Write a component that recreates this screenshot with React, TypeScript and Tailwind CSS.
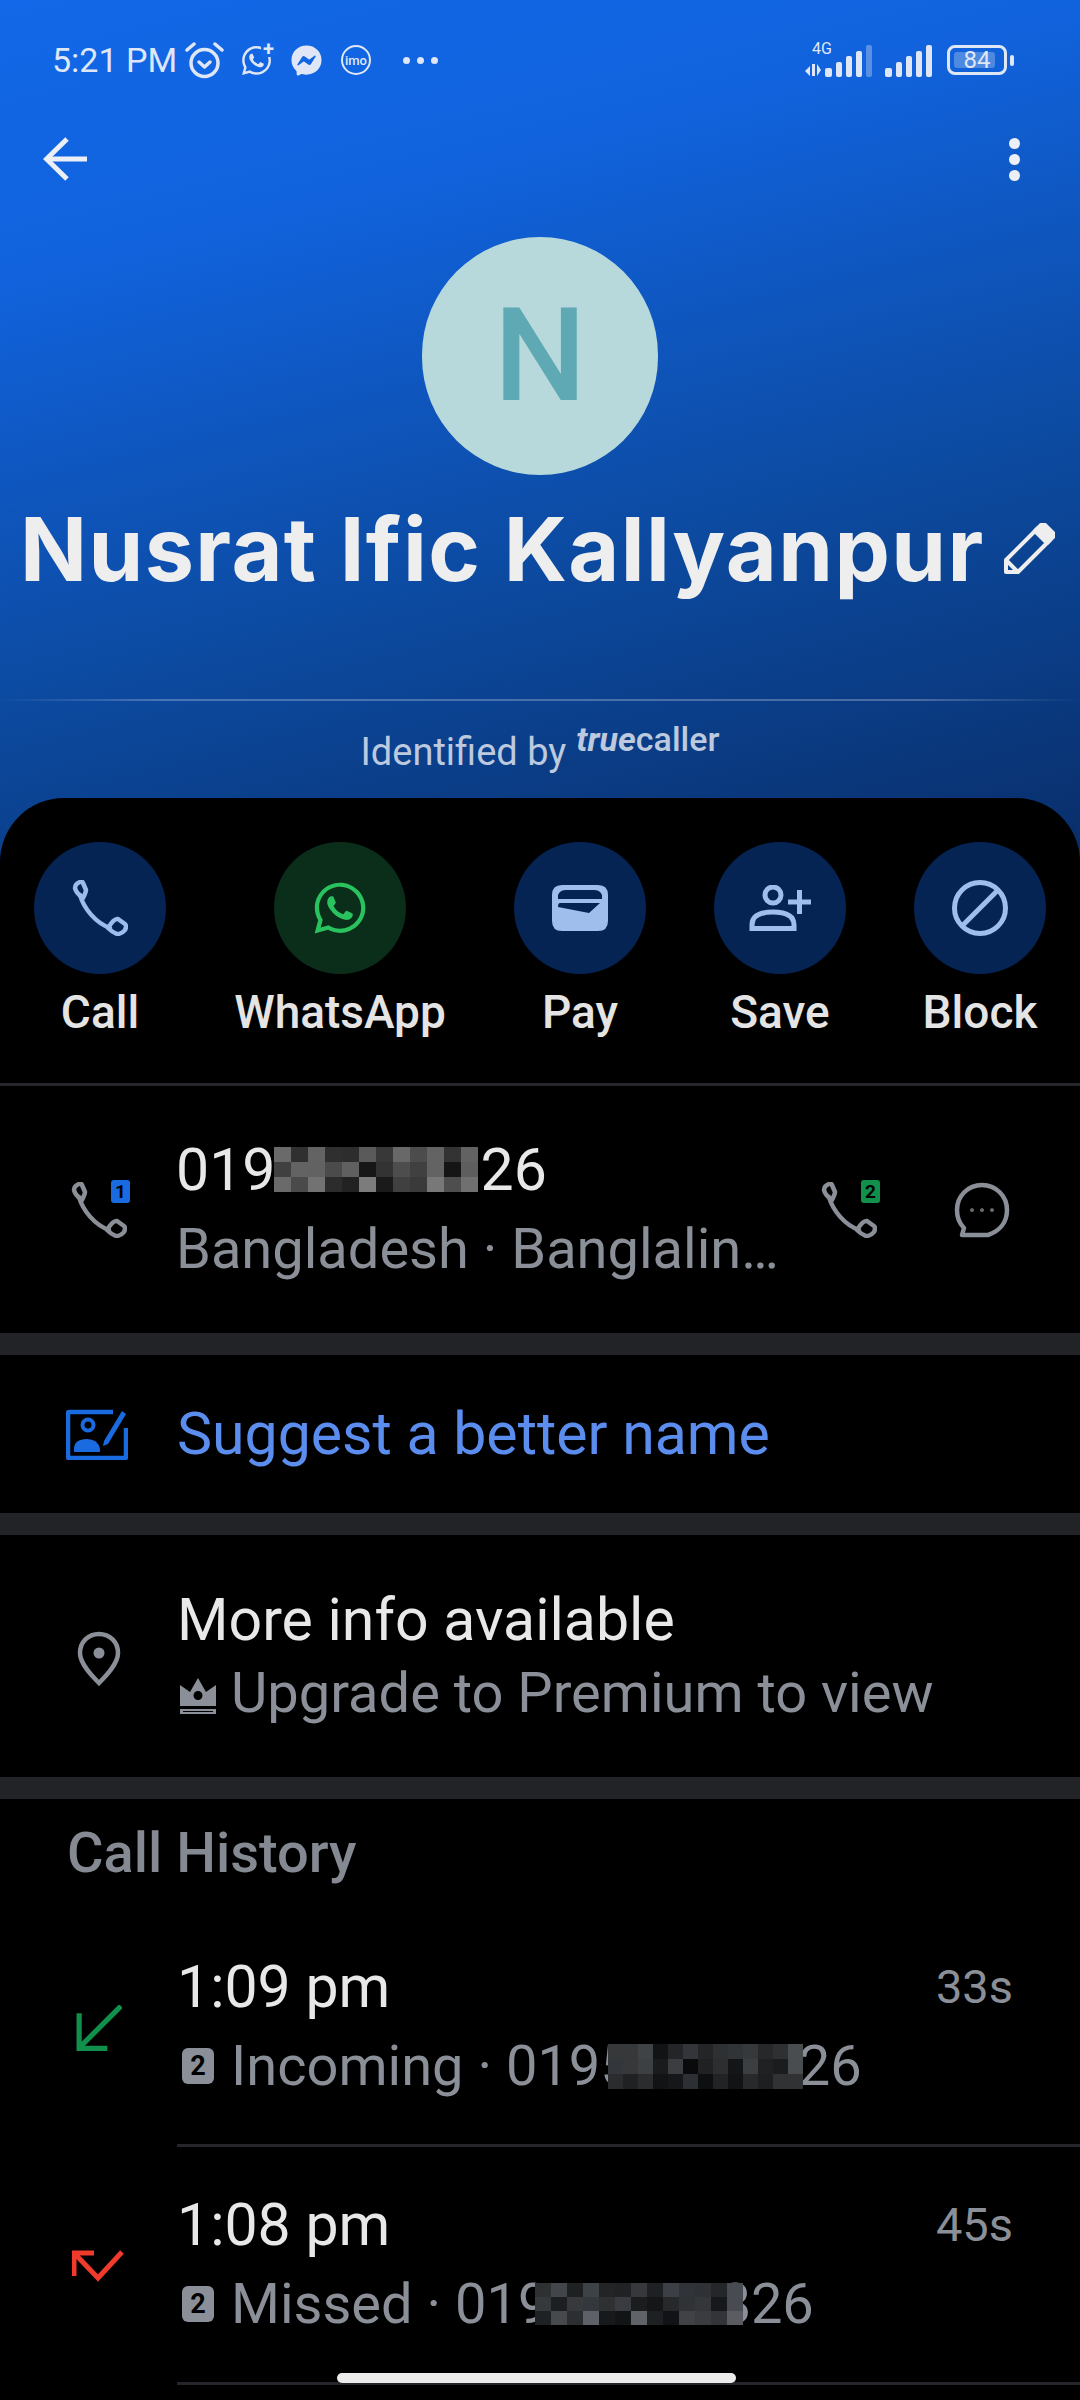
import { FaWhatsapp, FaFacebookMessenger } from "react-icons/fa";

const M1 = [
  ["#6a6a6a", "#303030", "#636363", "#2f2f2f", "#2d2d2d", "#5a5a5a", "#383838", "#686868", "#4c4c4c", "#636363", "#333333", "#626262"],
  ["#404040", "#636363", "#626262", "#4b4b4b", "#606060", "#171717", "#333333", "#4d4d4d", "#404040", "#636363", "#151515", "#5e5e5e"],
  ["#6a6a6a", "#4a4a4a", "#727272", "#2c2c2c", "#222222", "#7c7c7c", "#1a1a1a", "#404040", "#3a3a3a", "#787878", "#4e4e4e", "#707070"],
];
const M2 = [
  ["#36383a", "#36383a", "#3f4346", "#121314", "#242526", "#33353a", "#242526", "#2e3032", "#313436", "#36383a", "#272829", "#2e3032", "#4a4d50"],
  ["#33363a", "#36383a", "#3d4043", "#1a1b1c", "#3b3d40", "#0a0a0c", "#202122", "#2c2e30", "#141516", "#3c3f42", "#202122", "#1b1c1d", "#4a4d50"],
  ["#2a2c2e", "#202122", "#2a2c2e", "#121314", "#161718", "#2c3034", "#0e0f10", "#222324", "#121314", "#28292b", "#1e1f20", "#303234", "#303234"],
];
const M3 = [
  ["#2e3032", "#42464a", "#1e2022", "#3c4246", "#222426", "#202224", "#36383c", "#1e2022", "#3c4046", "#303438", "#2f3134", "#242628", "#484c52"],
  ["#36393c", "#1c1e1f", "#38393c", "#34383c", "#2e3032", "#383c40", "#1a1c1e", "#141618", "#262829", "#303336", "#34363a", "#16181a", "#484c52"],
  ["#1e2224", "#48494c", "#2c2e30", "#5e6268", "#18191b", "#121416", "#606468", "#1e2022", "#121316", "#404246", "#3a3c40", "#323438", "#5a5c62"],
];

function Mosaic({ rows, cell, h, className }: { rows: string[][]; cell: number; h: number; className: string }) {
  const w = rows[0].length * cell;
  return (
    <svg width={w} height={h * 3} viewBox={`0 0 ${w} ${h * 3}`} className={className}>
      {rows.map((r, y) =>
        r.map((c, x) => <rect key={`${x}-${y}`} x={x * cell} y={y * h} width={cell + 0.5} height={h + 0.5} fill={c} />)
      )}
    </svg>
  );
}

function Phone({ color, size = 56 }: { color: string; size?: number }) {
  return (
    <svg width={size} height={size} viewBox="0 0 56 56" fill="none" stroke={color} strokeWidth="4.5" strokeLinejoin="round" strokeLinecap="round">
      <path d="M3 8 Q3 4 8 2 Q10 1 11 3 L14 10 Q14 12 11 18 Q4 13 3 8 Z" />
      <path d="M8 15 C12 29 24 43 38 48" />
      <path d="M36 48 Q42 38 46 39 L53 44 Q55 46 53 50 Q50 54 45 54 Q40 52 36 48 Z" />
    </svg>
  );
}

function SimBadge({ n, color, text }: { n: string; color: string; text: string }) {
  return (
    <span className={`absolute top-[-2px] right-[-3px] w-[19px] h-[23px] rounded-[3px] flex items-center justify-center text-[19px] font-bold leading-none ${color} ${text}`}>
      {n}
    </span>
  );
}

function Sim2() {
  return (
    <span className="w-[32px] h-[36px] rounded-[6px] bg-[#8b9098] text-black text-[27px] font-bold leading-none flex items-center justify-center shrink-0 -ml-[1px] -mr-[1px]">
      2
    </span>
  );
}

function Bar() {
  return <div className="h-[22px] bg-[#212327]" />;
}

function Action({ label, green, children }: { label: string; green?: boolean; children: React.ReactNode }) {
  return (
    <div className="flex flex-col items-center">
      <div className={`w-[132px] h-[132px] rounded-full flex items-center justify-center ${green ? "bg-[#0a2e1a]" : "bg-[#052454]"}`}>
        {children}
      </div>
      <div className="mt-[14px] h-[48px] text-[46px] leading-[48px] font-medium text-[#e4e4e4] whitespace-nowrap">{label}</div>
    </div>
  );
}

function HistoryRow({ icon, time, dur, children, iconCls }: { icon: React.ReactNode; time: string; dur: string; children: React.ReactNode; iconCls: string }) {
  return (
    <div className="flex h-[238px]">
      <div className={`w-[177px] shrink-0 flex ${iconCls}`}>{icon}</div>
      <div className="flex-1 border-b-[3px] border-[#25262b] pt-[45px] pr-[67px] h-[238px]">
        <div className="flex justify-between items-center h-[66px]">
          <span className="text-[59px] leading-[66px] text-[#e8e8e8]">{time}</span>
          <span className="text-[47px] leading-[66px] text-[#8b9098]">{dur}</span>
        </div>
        <div className="flex items-center h-[66px] mt-[13px] pl-[6px] gap-[18px] text-[56px] text-[#8b9098] whitespace-nowrap">
          <Sim2 />
          <div className="flex items-center leading-[66px]">{children}</div>
        </div>
      </div>
    </div>
  );
}

export default function App() {
  return (
    <div className="relative w-[1080px] h-[2400px] overflow-hidden bg-black font-['Roboto',sans-serif]">
      <div className="h-[870px] bg-[linear-gradient(166deg,#1268e8_0%,#1162dc_25%,#0c4aa0_62%,#092d68_100%)]">
        {/* status bar */}
        <div className="h-[120px] flex items-center justify-between pl-[52px] pr-[66px] text-[#dfe7f6]">
          <div className="flex items-center">
            <span className="text-[34px] w-[132px] whitespace-nowrap">5:21 PM</span>
            <svg width="41" height="37" viewBox="0 0 41 37" fill="none" stroke="currentColor" strokeWidth="3.5" strokeLinecap="round" strokeLinejoin="round">
              <circle cx="20.5" cy="21" r="13.5" />
              <path d="M15 20 L20.5 25 L26 20" />
              <path d="M3 8 L10 2" />
              <path d="M38 8 L31 2" />
            </svg>
            <span className="relative ml-[15px] w-[33px] h-[33px]">
              <FaWhatsapp size={33} />
              <span className="absolute top-[-2px] right-[-3px] w-[15px] h-[15px] flex items-center justify-center bg-[#1268e6] text-[20px] leading-none font-bold">+</span>
            </span>
            <FaFacebookMessenger size={31} className="ml-[18px]" />
            <span className="ml-[19px] w-[30px] h-[30px] rounded-full border-2 border-current flex items-center justify-center text-[13px] font-medium leading-none">imo</span>
            <span className="ml-[32px] flex gap-[7px]">
              <i className="w-[7px] h-[7px] rounded-full bg-current" />
              <i className="w-[7px] h-[7px] rounded-full bg-current" />
              <i className="w-[7px] h-[7px] rounded-full bg-current" />
            </span>
          </div>
          <div className="flex items-center">
            <div className="relative w-[68px] h-[32px] mt-[2px]">
              <span className="absolute left-[7px] top-[-4px] text-[16px] leading-[16px]">4G</span>
              <svg width="68" height="32" viewBox="0 0 68 32" fill="currentColor">
                <path d="M0 26 L5 21 L5 31 Z M7 19 L10 19 L10 31 L7 31 Z M12 19 L16 25 L12 31 Z" />
                <rect x="20" y="23" width="7" height="9" rx="2" />
                <rect x="31" y="17" width="6" height="15" rx="2" />
                <rect x="41" y="11" width="6" height="21" rx="2" />
                <rect x="51" y="6" width="6" height="26" rx="2" />
                <rect x="61" y="0" width="6" height="32" rx="2" opacity="0.35" />
              </svg>
            </div>
            <svg width="48" height="32" viewBox="0 0 48 32" fill="currentColor" className="ml-[12px] mt-[2px]">
              <rect x="0" y="23" width="7" height="9" rx="2" />
              <rect x="11" y="17" width="6" height="15" rx="2" />
              <rect x="21" y="11" width="6" height="21" rx="2" />
              <rect x="31" y="6" width="6" height="26" rx="2" />
              <rect x="41" y="0" width="6" height="32" rx="2" />
            </svg>
            <div className="ml-[14px] relative w-[60px] h-[30px] rounded-[8px] border-[3px] border-current flex items-center justify-center">
              <span className="absolute left-[4px] top-[4px] w-[41px] h-[16px] rounded-[3px] bg-[#dfe7f6]/30" />
              <span className="relative text-[24px] leading-none">84</span>
            </div>
            <span className="ml-[3px] w-[4px] h-[11px] rounded-[2px] bg-current" />
          </div>
        </div>
        {/* toolbar */}
        <div className="h-[78px] flex items-center justify-between pl-[43px] pr-[60px]">
          <svg width="44" height="44" viewBox="0 0 44 44" fill="none" stroke="#eceff5" strokeWidth="5">
            <path d="M44 22 L4 22" />
            <path d="M24 2 L3.5 22 L24 42" />
          </svg>
          <div className="flex flex-col gap-[5px]">
            <i className="w-[11px] h-[11px] rounded-full bg-[#eceff5]" />
            <i className="w-[11px] h-[11px] rounded-full bg-[#eceff5]" />
            <i className="w-[11px] h-[11px] rounded-full bg-[#eceff5]" />
          </div>
        </div>
        {/* avatar */}
        <div className="mt-[39px] flex justify-center">
          <div className="w-[236px] h-[238px] rounded-full bg-[#b8d9dc] flex items-center justify-center text-[130px] font-medium text-[#5fa9b5] leading-none">N</div>
        </div>
        {/* name */}
        <div className="mt-[21px] h-[100px] pl-[20px] flex items-center whitespace-nowrap">
          <span className="w-[962px] mt-[5px] font-['Inter',sans-serif] text-[88px] font-bold leading-[100px] text-[#eeeeee] tracking-[1.4px]">Nusrat Ific Kallyanpur</span>
          <svg width="52" height="52" viewBox="0 0 52 52" fill="none" stroke="#eeeeee" strokeWidth="4" strokeLinejoin="round" className="ml-[21px] mt-[6px]">
            <path d="M3 37 L35 5 L47 17 L15 49 L3 49 Z" />
            <path d="M3 37 L15 49" />
            <path d="M38 2 Q40 0 42 2 L50 10 Q52 12 50 14 L44 20 L32 8 Z" fill="#eeeeee" />
          </svg>
        </div>
        <div className="mt-[103px] h-[2px] bg-[linear-gradient(90deg,transparent,#ffffff40_15%,#ffffff40_85%,transparent)]" />
        {/* identified by */}
        <div className="mt-[25px] flex justify-center items-start gap-[10px] text-[#bcc9de]">
          <span className="text-[38px] leading-[50px] whitespace-nowrap mt-[1px]">Identified by</span>
          <span className="text-[34px] leading-[34px] whitespace-nowrap -mt-[4px] font-medium">
            <span className="italic font-bold">true</span>caller
          </span>
        </div>
      </div>

      {/* sheet */}
      <div className="relative -mt-[72px] bg-black rounded-t-[64px]">
        <div className="pt-[44px] h-[285px] grid grid-cols-[200px_280px_200px_200px_200px]">
          <Action label="Call">
            <Phone color="#9bbcec" />
          </Action>
          <Action label="WhatsApp" green>
            <FaWhatsapp size={58} color="#29c25f" />
          </Action>
          <Action label="Pay">
            <svg width="56" height="46" viewBox="0 0 56 46" fill="#9fbeeb">
              <path fillRule="evenodd" d="M10 0 H46 Q56 0 56 10 V36 Q56 46 46 46 H10 Q0 46 0 36 V10 Q0 0 10 0 Z M6 14 H50 V10 Q48 5 42 5 H14 Q8 5 6 10 Z M6 22 L37 28 L48 18 H8 Q6 18 6 22 Z" />
            </svg>
          </Action>
          <Action label="Save">
            <svg width="62" height="46" viewBox="0 0 62 46" fill="none" stroke="#9fbeeb" strokeWidth="5">
              <circle cx="24" cy="10" r="8" />
              <path d="M3 43.5 V40 Q3 27 24 27 Q45 27 45 40 V43.5 Z" />
              <path d="M39 17 H62 M50.5 5 V29" />
            </svg>
          </Action>
          <Action label="Block">
            <svg width="56" height="56" viewBox="0 0 56 56" fill="none" stroke="#9fbeeb" strokeWidth="5">
              <circle cx="28" cy="28" r="25.5" />
              <path d="M10 46 L46 10" />
            </svg>
          </Action>
        </div>
        <div className="h-[3px] bg-[#25272b]" />

        {/* number */}
        <div className="h-[247px] flex items-center">
          <div className="w-[176px] shrink-0 pl-[71px]">
            <div className="relative w-[56px] h-[56px]">
              <Phone color="#8b9098" />
              <SimBadge n="1" color="bg-[#1a6be0]" text="text-black" />
            </div>
          </div>
          <div className="w-[645px] shrink-0 -mt-[2px]">
            <div className="flex items-center text-[59px] leading-[68px] text-[#e8e8e8] h-[68px]">
              019
              <Mosaic rows={M1} cell={17} h={15} className="relative -ml-[1px] mr-[2px]" />
              26
            </div>
            <div className="text-[56px] leading-[66px] text-[#8b9098] whitespace-nowrap mt-[12px]">Bangladesh · Banglalin…</div>
          </div>
          <div className="relative w-[56px] h-[56px]">
            <Phone color="#8b9098" />
            <SimBadge n="2" color="bg-[#10904a]" text="text-black" />
          </div>
          <svg width="56" height="56" viewBox="0 0 56 56" fill="none" stroke="#8b9098" strokeWidth="4.5" strokeLinejoin="round" className="ml-[77px]">
            <path d="M28 3 C42 3 53 14 53 28 C53 40 46 49 34 53 H8 L10 46 C5 41 3 35 3 28 C3 14 14 3 28 3 Z" />
            <circle cx="18" cy="28" r="0.6" fill="#8b9098" strokeWidth="2.5" stroke="#8b9098" />
            <circle cx="28" cy="28" r="0.6" fill="#8b9098" strokeWidth="2.5" stroke="#8b9098" />
            <circle cx="38" cy="28" r="0.6" fill="#8b9098" strokeWidth="2.5" stroke="#8b9098" />
          </svg>
        </div>
        <Bar />

        {/* suggest */}
        <div className="h-[158px] flex items-center">
          <div className="w-[177px] shrink-0 pl-[66px]">
            <svg width="62" height="52" viewBox="0 0 62 52" fill="none">
              <path d="M47 4 H3 Q2 4 2 5 V49 Q2 50 3 50 H59 Q60 50 60 49 V20" stroke="#1a6be0" strokeWidth="4.5" />
              <circle cx="22" cy="17" r="5.5" stroke="#1a6be0" strokeWidth="4" />
              <path d="M8 44 V41 Q8 31 21 31 Q32 31 34 41 V44 Z" fill="#1a6be0" />
              <path d="M38 33 L56 3 L60 6 L42 36 L37 38 Z" fill="#1a6be0" />
            </svg>
          </div>
          <span className="text-[59px] leading-[66px] text-[#5b8def]">Suggest a better name</span>
        </div>
        <Bar />

        {/* more info */}
        <div className="h-[242px] flex items-center">
          <div className="w-[177px] shrink-0 pl-[77px] pt-[5px]">
            <svg width="44" height="56" viewBox="0 0 44 56" fill="none">
              <path d="M22 3 C11 3 3 11 3 22 C3 33 15 45 22 52 C29 45 41 33 41 22 C41 11 33 3 22 3 Z" stroke="#8b9098" strokeWidth="4.5" />
              <circle cx="22" cy="22" r="5.5" fill="#8b9098" />
            </svg>
          </div>
          <div>
            <div className="text-[59px] leading-[66px] text-[#e8e8e8]">More info available</div>
            <div className="flex items-center text-[56px] leading-[66px] text-[#8b9098] mt-[7px] whitespace-nowrap">
              <svg width="38" height="36" viewBox="0 0 38 36" fill="#8b9098" className="ml-[2px] mr-[14px] mt-[6px]">
                <path fillRule="evenodd" d="M19 0 L27 14 L37 7 V28 H1 V7 L11 14 Z M19 13 A4.5 4.5 0 1 0 19 22 A4.5 4.5 0 1 0 19 13 Z" />
                <path d="M1 31 H37 V36 H1 Z M4 33 V34 H34 V33 Z" fillRule="evenodd" />
              </svg>
              Upgrade to Premium to view
            </div>
          </div>
        </div>
        <Bar />

        {/* call history */}
        <div className="pl-[67px] pt-[24px] h-[110px] text-[56px] leading-[60px] font-medium text-[#858a92]">Call History</div>
        <HistoryRow
          time="1:09 pm"
          dur="33s"
          iconCls="pt-[96px] pl-[76px]"
          icon={
            <svg width="46" height="46" viewBox="0 0 44 44" fill="none" stroke="#10904a" strokeWidth="5">
              <path d="M43 1 L3 41" />
              <path d="M3 8 V41.5 H30" />
            </svg>
          }
        >
          Incoming · 0195
          <Mosaic rows={M2} cell={15} h={15} className="relative -ml-[24px] mr-[-4px]" />
          26
        </HistoryRow>
        <HistoryRow
          time="1:08 pm"
          dur="45s"
          iconCls="pt-[103px] pl-[72px]"
          icon={
            <svg width="52" height="32" viewBox="0 0 52 32" fill="none" stroke="#ef3a2c" strokeWidth="5">
              <path d="M2 26 V3 H22" />
              <path d="M3 4 L26 28 L50 2" />
            </svg>
          }
        >
          Missed · 019
          <Mosaic rows={M3} cell={16} h={14} className="relative -ml-[14px] -mr-[24px]" />
          826
        </HistoryRow>
      </div>

      {/* home indicator */}
      <div className="absolute left-[337px] top-[2373px] w-[399px] h-[10px] rounded-full bg-[#ececec]" />
    </div>
  );
}
